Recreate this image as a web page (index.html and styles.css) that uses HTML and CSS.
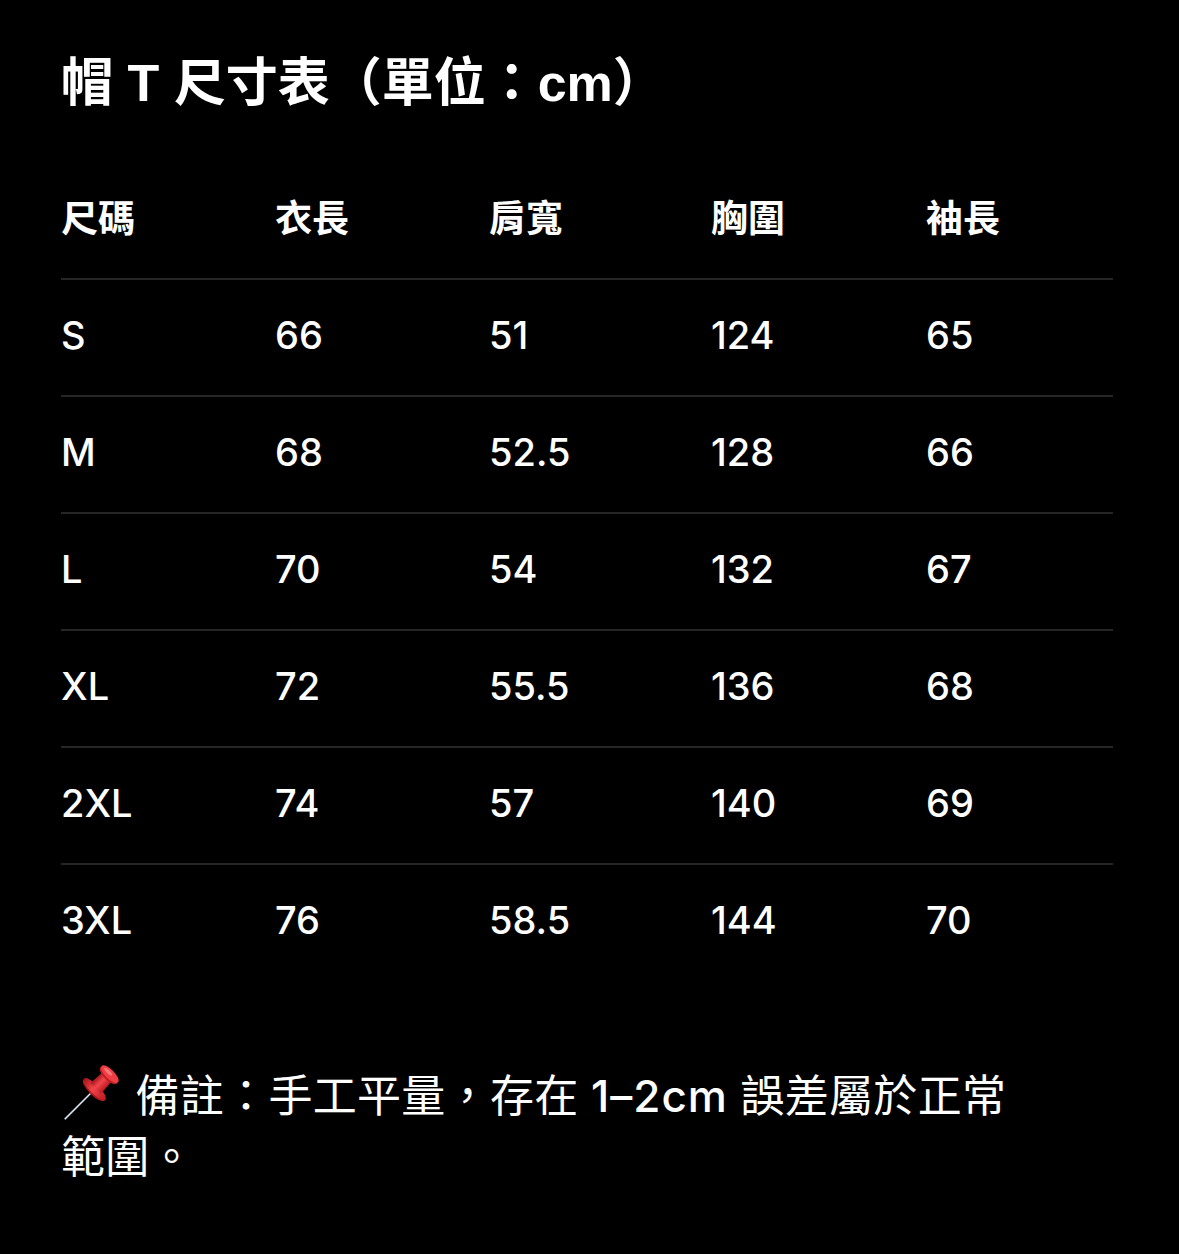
FILE: index.html
```html
<!DOCTYPE html>
<html lang="zh-Hant">
<head>
<meta charset="utf-8">
<title>帽T尺寸表</title>
<link rel="stylesheet" href="styles.css">
</head>
<body>
<main class="page">
  <h1 class="title">帽 T 尺寸表（單位：cm）</h1>
  <div class="table">
    <div class="row head">
      <div class="cell">尺碼</div><div class="cell">衣長</div><div class="cell">肩寬</div><div class="cell">胸圍</div><div class="cell">袖長</div>
    </div>
    <div class="row">
      <div class="cell">S</div><div class="cell">66</div><div class="cell">51</div><div class="cell">124</div><div class="cell">65</div>
    </div>
    <div class="row">
      <div class="cell">M</div><div class="cell">68</div><div class="cell">52.5</div><div class="cell">128</div><div class="cell">66</div>
    </div>
    <div class="row">
      <div class="cell">L</div><div class="cell">70</div><div class="cell">54</div><div class="cell">132</div><div class="cell">67</div>
    </div>
    <div class="row">
      <div class="cell">XL</div><div class="cell">72</div><div class="cell">55.5</div><div class="cell">136</div><div class="cell">68</div>
    </div>
    <div class="row">
      <div class="cell">2XL</div><div class="cell">74</div><div class="cell">57</div><div class="cell">140</div><div class="cell">69</div>
    </div>
    <div class="row last">
      <div class="cell">3XL</div><div class="cell">76</div><div class="cell">58.5</div><div class="cell">144</div><div class="cell">70</div>
    </div>
  </div>
  <p class="note"><svg class="pin" viewBox="0 0 60 60" aria-hidden="true">
    <defs>
      <linearGradient id="pr" x1="0" y1="0" x2="1" y2="0">
        <stop offset="0" stop-color="#a3141b"/>
        <stop offset="0.45" stop-color="#f0454a"/>
        <stop offset="1" stop-color="#b8171f"/>
      </linearGradient>
      <linearGradient id="nd" x1="0" y1="0" x2="1" y2="0">
        <stop offset="0" stop-color="#7a8a99"/>
        <stop offset="0.5" stop-color="#e4ecf2"/>
        <stop offset="1" stop-color="#6d7c8a"/>
      </linearGradient>
    </defs>
    <g transform="translate(33 26) rotate(45) scale(1.15)">
      <rect x="-0.9" y="2" width="1.8" height="34" fill="url(#nd)"/>
      <ellipse cx="0" cy="0" rx="13" ry="4.5" fill="#b3161d"/>
      <ellipse cx="0" cy="-1" rx="13" ry="4" fill="url(#pr)"/>
      <path d="M-6.5 -2 L-5.5 -17 L5.5 -17 L6.5 -2 Z" fill="url(#pr)"/>
      <ellipse cx="0" cy="-18" rx="10" ry="4.2" fill="#c21a22"/>
      <ellipse cx="0" cy="-19.5" rx="10" ry="4" fill="#ee3d43"/>
      <ellipse cx="-2.5" cy="-20" rx="4.5" ry="1.5" fill="#ff9a9a" opacity="0.6"/>
    </g>
  </svg> 備註：手工平量，存在 <span class="latin">1–2cm</span> 誤差屬於正常<span class="keep">範圍。</span></p>
</main>
</body>
</html>
```

FILE: styles.css
```css
html, body {
  margin: 0;
  padding: 0;
  background: #000;
}

.page {
  width: 1052px;
  padding: 52px 0 40px 61px;
  color: #fff;
  font-family: "Liberation Sans", "Noto Sans CJK TC", sans-serif;
}

.title {
  margin: 0;
  font-size: 52px;
  line-height: 62px;
  font-weight: 700;
}

.table {
  margin-top: 49px;
}

.row {
  display: grid;
  grid-template-columns: 214px 214px 222px 215px 1fr;
  align-items: center;
  box-sizing: border-box;
  height: 117px;
  padding-bottom: 6px;
  border-bottom: 2px solid #262626;
  font-family: Inter, "Liberation Sans", sans-serif;
  font-weight: 500;
  font-size: 38px;
}

.row.last {
  border-bottom: none;
  height: 115px;
}

.row.head {
  padding-bottom: 8px;
  font-family: "Noto Sans CJK TC", sans-serif;
  font-weight: 700;
  font-size: 37px;
}

.cell {
  line-height: 1;
}

.note {
  margin: 84px 0 0;
  width: 1010px;
  font-size: 44px;
  line-height: 61px;
  font-weight: 400;
  letter-spacing: 0.3px;
}

.latin {
  font-family: Inter, "Liberation Sans", sans-serif;
  font-weight: 500;
  font-size: 44px;
  letter-spacing: 1px;
}

.keep {
  white-space: nowrap;
}

.pin {
  width: 60px;
  height: 60px;
  vertical-align: -12px;
  margin-right: 2px;
}
```
